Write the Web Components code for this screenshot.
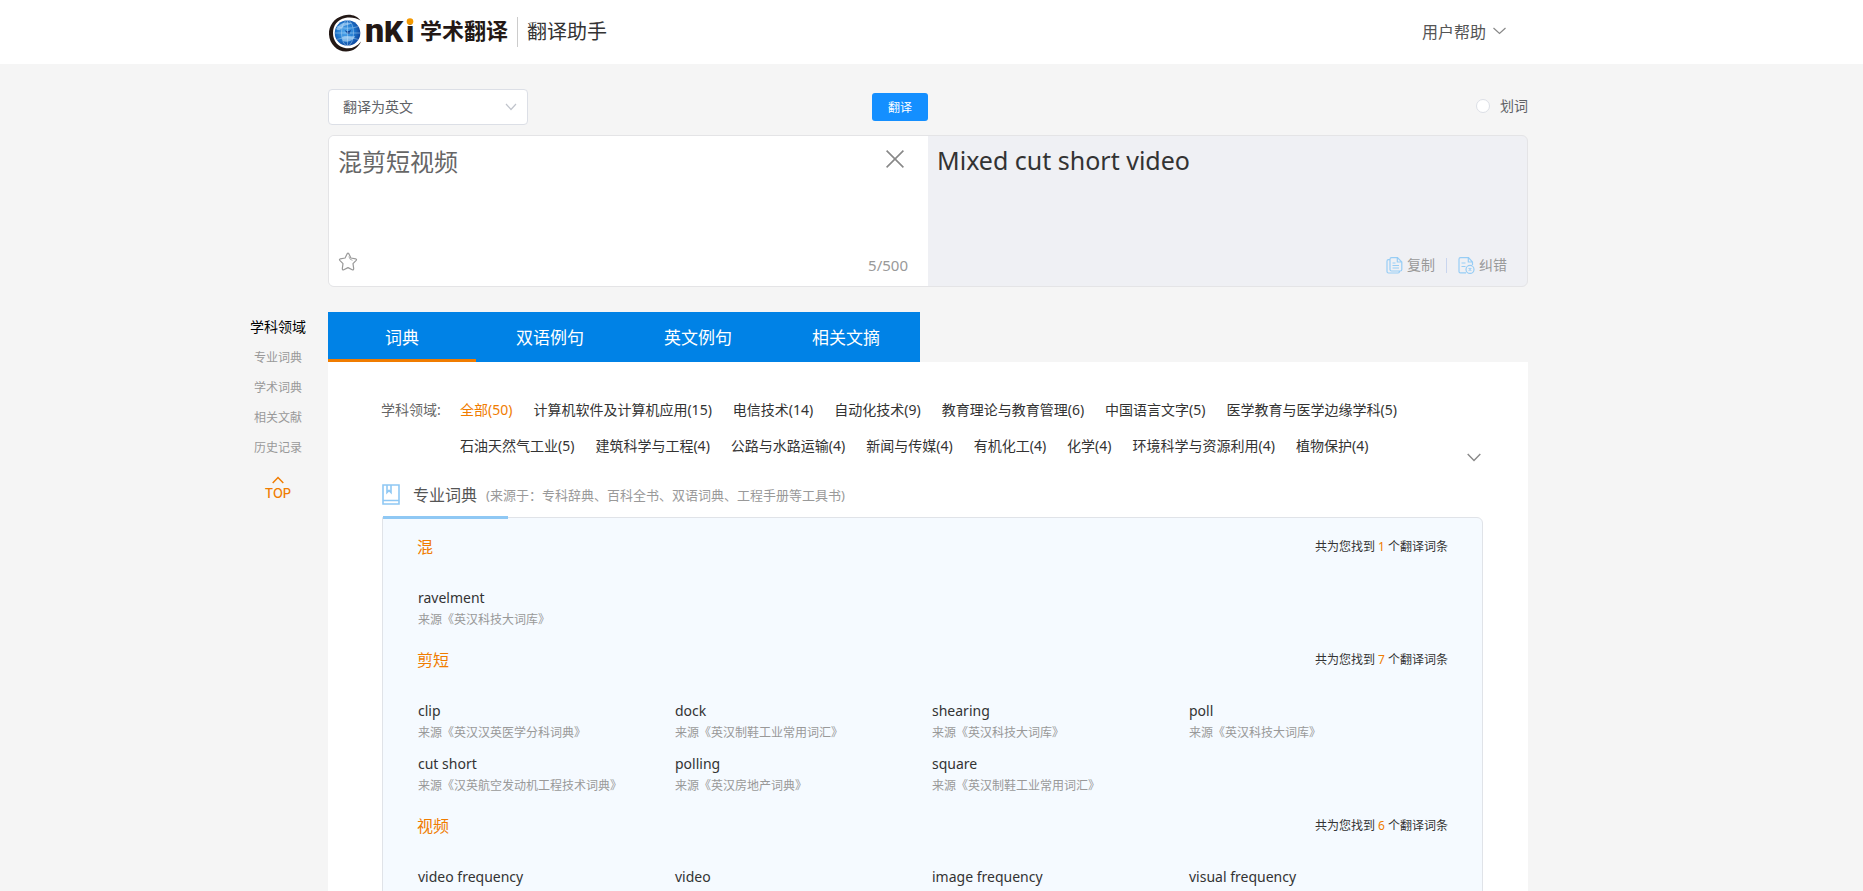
<!DOCTYPE html>
<html lang="zh-CN">
<head>
<meta charset="utf-8">
<title>CNKI学术翻译 - 翻译助手</title>
<style>
html, body { margin: 0; background: #f5f5f5; }
body { font-family: "Noto Sans", "Noto Sans CJK SC", sans-serif; font-size: 14px; color: #333; }
</style>
</head>
<body>
<cnki-app></cnki-app>

<template id="t-app">
<style>
:host { display: flex; flex-direction: column; height: 100vh; overflow: hidden; box-sizing: border-box; --edge: 7px; --w: 1200px; }
main { display: grid; grid-template-columns: minmax(100px, 1fr) minmax(0, var(--w)) minmax(0, 1fr); padding-right: var(--edge); row-gap: 25px; }
translate-panel, .results { grid-column: 2; min-width: 0; }
side-nav { grid-column: 1; justify-self: end; }
.card { background: #fff; padding: 30px 45px 0 53px; }
</style>
<site-header></site-header>
<main>
  <translate-panel></translate-panel>
  <side-nav></side-nav>
  <div class="results">
    <result-tabs></result-tabs>
    <div class="card">
      <subject-filter></subject-filter>
      <dict-section heading="专业词典" note="(来源于：专科辞典、百科全书、双语词典、工程手册等工具书)">
        <dict-group term="混" count="1">
          <dict-entry source="英汉科技大词库">ravelment</dict-entry>
        </dict-group>
        <dict-group term="剪短" count="7">
          <dict-entry source="英汉汉英医学分科词典">clip</dict-entry>
          <dict-entry source="英汉制鞋工业常用词汇">dock</dict-entry>
          <dict-entry source="英汉科技大词库">shearing</dict-entry>
          <dict-entry source="英汉科技大词库">poll</dict-entry>
          <dict-entry source="汉英航空发动机工程技术词典">cut short</dict-entry>
          <dict-entry source="英汉房地产词典">polling</dict-entry>
          <dict-entry source="英汉制鞋工业常用词汇">square</dict-entry>
        </dict-group>
        <dict-group term="视频" count="6">
          <dict-entry>video frequency</dict-entry>
          <dict-entry>video</dict-entry>
          <dict-entry>image frequency</dict-entry>
          <dict-entry>visual frequency</dict-entry>
        </dict-group>
      </dict-section>
    </div>
  </div>
</main>
</template>

<template id="t-header">
<style>
:host { display: block; background: #fff; padding-right: var(--edge); flex: none; }
.in { max-width: var(--w); height: 64px; margin: 0 auto; display: flex; align-items: center; }
a { display: block; height: 40px; color: inherit; }
svg { display: block; overflow: visible; }
.title { border-left: 1px solid #ccc; margin: 0 0 0 9px; padding-left: 9px; font-size: 20px; line-height: 30px; color: #333; font-weight: 400; }
button { margin-left: auto; margin-right: 22px; border: 0; padding: 0 0 2px; background: none; font: inherit; font-size: 16px; color: #555; display: flex; align-items: center; gap: 7px; }
</style>
<div class="in">
  <a href="#" aria-label="CNKI 学术翻译">
    <svg width="180" height="40" viewBox="0 0 180 40">
      <defs>
        <radialGradient id="g" cx=".42" cy=".45" r=".62"><stop offset="0" stop-color="#58aef0"/><stop offset=".55" stop-color="#1f78cf"/><stop offset="1" stop-color="#0b3f96"/></radialGradient>
      </defs>
      <path d="M32.500 8.500C29 3.500 22 1.500 15.500 3.500C6 6 .5 14 1 22.500C1.500 32 9 39.500 18 39.500C25 39.500 30.500 35.500 33 29.500C29 34.500 24 37 18 36.200C10 35 5 29 5 21C5 13.500 9.500 7.500 17 6C23 5 28.500 6 32.500 8.500Z" fill="#231815"/>
      <circle cx="19.500" cy="21" r="12.800" fill="url(#g)"/>
      <path d="M8 17C12 11 17 9.500 24 11C20 14 17 12 14 16C12 19 9 18 8 17ZM14 25C17 23 22 25 27 24C26 28 20 31 15 29Z" fill="#d4edff" opacity=".55"/>
      <path d="M16.500 18L19.500 19.500L23 18L21.500 22L19 21.500Z" fill="#0b3f96"/>
      <g fill="none" stroke="#cfe8fb" stroke-width=".7" opacity=".6"><ellipse cx="19.500" cy="21" rx="6" ry="12.800"/><path d="M19.500 8.200V33.800M7 21H32M8.500 14.500Q19.500 18 30.500 14.500M8.500 27.500Q19.500 24 30.500 27.500"/></g>
      <g fill="#231815" font-family="Roboto" font-weight="900">
        <text x="37" y="30" font-size="34">n</text><text x="56" y="30" font-size="30">K</text><text x="78" y="30" font-size="30">i</text>
      </g>
      <rect x="78" y="4" width="10" height="8" fill="#fff"/>
      <circle cx="82" cy="9.500" r="3.300" fill="#f39800"/>
      <text x="92" y="27" font-size="22" font-weight="700" fill="#231815" font-family="Noto Sans CJK SC">学术翻译</text>
    </svg>
  </a>
  <h1 class="title">翻译助手</h1>
  <button type="button">用户帮助<svg width="13" height="8" viewBox="0 0 13 8" fill="none" stroke="#888" stroke-width="1.200"><path d="M.5 1L6.500 6.500L12.500 1"/></svg></button>
</div>
</template>

<template id="t-panel">
<style>
:host { display: block; padding-top: 25px; }
.bar { display: grid; grid-template-columns: 1fr 1fr; align-items: center; height: 36px; margin-bottom: 10px; }
.l, .r { display: flex; align-items: center; justify-content: space-between; }
.r { justify-content: flex-end; }
.sel { position: relative; width: 200px; }
.sel svg { position: absolute; right: 11px; top: 14px; pointer-events: none; }
select { appearance: none; width: 100%; height: 36px; border: 1px solid #dcdfe6; border-radius: 4px; background: #fff; padding: 0 14px 2px; font: inherit; color: #606266; }
.go { width: 56px; height: 28px; border: 0; border-radius: 3px; background: #148fff; color: #fff; font: inherit; font-size: 12px; padding: 0; }
label { display: flex; align-items: center; gap: 10px; color: #606266; line-height: 20px; padding-bottom: 3px; }
input { appearance: none; width: 14px; height: 14px; border: 1px solid #dcdfe6; border-radius: 50%; background: #fff; margin: 0; }
.box { display: grid; grid-template-columns: 1fr 1fr; height: 150px; border: 1px solid #e4e4e6; border-radius: 6px; overflow: hidden; background: #eff0f4; }
.src { background: #fff; }
.src, .dst { display: flex; flex-direction: column; justify-content: space-between; padding: 8px 20px 6px 9px; font-size: 24px; line-height: 36px; }
.top, .foot { display: flex; justify-content: space-between; }
textarea { flex: 1; border: 0; padding: 0; resize: none; outline: 0; font: inherit; line-height: 36px; height: 72px; color: #666; background: none; overflow: hidden; }
.icon { border: 0; background: none; padding: 0; display: flex; align-items: center; font: inherit; font-size: 14px; color: #999; gap: 4px; line-height: 30px; }
.clear { height: 30px; margin-right: 4px; }
.star { height: 24px; }
.count { font-size: 15px; color: #999; line-height: 30px; }
output { color: #333; font-size: 25px; line-height: 32px; }
.dst .foot { justify-content: flex-end; align-items: center; }
.sep { width: 1px; height: 15px; background: #c9d5ee; margin: 0 11px; }
</style>
<div class="bar">
  <div class="l">
    <div class="sel"><select aria-label="翻译方向"><option>翻译为英文</option></select>
      <svg width="12" height="8" viewBox="0 0 12 8" fill="none" stroke="#c0c4cc" stroke-width="1.200"><path d="M1 1L6 6.500L11 1"/></svg></div>
    <button class="go" type="button">翻译</button>
  </div>
  <div class="r"><label><input type="radio" name="pick">划词</label></div>
</div>
<div class="box">
  <div class="src">
    <div class="top"><textarea aria-label="原文" spellcheck="false">混剪短视频</textarea>
      <button class="icon clear" type="button" aria-label="清空"><svg width="18" height="18" viewBox="0 0 18 18" fill="none" stroke="#888" stroke-width="1.600"><path d="M.6 .6L17.400 17.400M17.400 .6L.6 17.400"/></svg></button></div>
    <div class="foot">
      <button class="icon star" type="button" aria-label="收藏"><svg width="20" height="20" viewBox="0 0 20 20" fill="none" stroke="#999" stroke-width="1.200" stroke-linejoin="round"><path d="M9.200 1.700Q10 .6 10.800 1.700L12.900 6L17.600 6.800Q19.100 7.200 18.200 8.400L15 11.700L15.700 16.600Q15.700 18.400 14.200 17.800L10 15.600L5.800 17.800Q4.300 18.400 4.300 16.600L5 11.700L1.800 8.400Q.9 7.200 2.400 6.800L7.100 6Z"/><path d="M10.800 4.500L12.200 7.300L14.500 8.300" stroke-width=".8"/></svg></button>
      <span class="count">5/500</span></div>
  </div>
  <div class="dst">
    <output>Mixed cut short video</output>
    <div class="foot">
      <button class="icon" type="button"><svg width="17" height="17" viewBox="0 0 17 17" fill="none" stroke="#97cdf5" stroke-width="1.200"><path d="M5.500 .7H11.500L15.800 5V12.500Q15.800 14 14.300 14H5.500Q4 14 4 12.500V2.200Q4 .7 5.500 .7ZM11.300 1V5H15.500M4 2.700H2.500Q1 2.700 1 4.200V14.500Q1 16 2.500 16H12Q13.500 16 13.500 14.200M6.500 6H9.500M6.500 8.500H13M6.500 11H13"/></svg>复制</button>
      <span class="sep"></span>
      <button class="icon" type="button"><svg width="17" height="17" viewBox="0 0 17 17" fill="none" stroke="#97cdf5" stroke-width="1.200"><path d="M8 15.900H2.500Q1 15.900 1 14.400V2.200Q1 .7 2.500 .7H10.500L14.500 5V8M10.300 1V5H14.300M3.500 6H7.500M3.500 9.500H7.500M10.700 11.100L13.300 13.700M13.300 11.100L10.700 13.700"/><circle cx="12" cy="12.400" r="4"/></svg>纠错</button>
    </div>
  </div>
</div>
</template>

<template id="t-nav">
<style>
:host { display: block; width: 100px; text-align: center; }
nav { display: flex; flex-direction: column; }
a { color: #999; text-decoration: none; font-size: 12px; line-height: 30px; }
a.on { color: #000; font-size: 14px; padding-bottom: 1px; }
a.top { color: #f07c00; font: 500 13px/14px Inter, sans-serif; margin-top: 13px; display: flex; flex-direction: column; align-items: center; gap: 2px; }
</style>
<nav aria-label="页内导航">
  <a class="on" href="#">学科领域</a><a href="#">专业词典</a><a href="#">学术词典</a><a href="#">相关文献</a><a href="#">历史记录</a>
  <a class="top" href="#"><svg width="12" height="8" viewBox="0 0 12 8" fill="none" stroke="#f07c00" stroke-width="1.500"><path d="M.7 7L6 1.500L11.300 7"/></svg>TOP</a>
</nav>
</template>

<template id="t-tabs">
<style>
:host { display: block; }
[role=tablist] { display: grid; grid-template-columns: repeat(4, 148px); width: max-content; background: #0082e6; }
button { height: 50px; border: 0; border-bottom: 3px solid transparent; background: none; padding: 2px 0 0; font: inherit; font-size: 17px; color: #fff; }
button[aria-selected=true] { border-bottom-color: #f07c00; }
</style>
<div role="tablist">
  <button role="tab" type="button" aria-selected="true">词典</button><button role="tab" type="button" aria-selected="false">双语例句</button><button role="tab" type="button" aria-selected="false">英文例句</button><button role="tab" type="button" aria-selected="false">相关文摘</button>
</div>
</template>

<template id="t-filter">
<style>
:host { display: flex; line-height: 36px; }
.lab { color: #666; width: 79px; flex: none; }
ul { list-style: none; margin: 0; padding: 0; display: flex; flex-wrap: wrap; column-gap: 21px; flex: 1; }
a { color: #333; text-decoration: none; }
a.on { color: #f07c00; }
button { align-self: flex-end; border: 0; background: none; padding: 0; height: 14px; width: 14px; margin-right: 2px; display: flex; align-items: center; }
</style>
<span class="lab">学科领域:</span>
<ul></ul>
<button type="button" aria-label="展开"><svg width="14" height="9" viewBox="0 0 14 9" fill="none" stroke="#888" stroke-width="1.400"><path d="M.7 1L7 7.500L13.300 1"/></svg></button>
</template>

<template id="t-section">
<style>
:host { display: block; margin-top: 15px; margin-left: 1px; }
header { display: flex; align-items: center; height: 30px; }
h2 { margin: 0 9px 0 13px; font-size: 16px; font-weight: 400; color: #555; }
.note { font-size: 13px; color: #999; }
.mark { width: 125px; height: 3px; background: #8fc8f4; margin: 7px 0 -2px 1px; position: relative; }
.list { border: 1px solid #e0e3e8; border-radius: 0 6px 6px 6px; background: #f5faff; padding: 17px 34px 20px; }
</style>
<header>
  <svg width="18" height="21" viewBox="0 0 18 21" fill="none" stroke="#8fc8f4" stroke-width="1.600"><path d="M1 1H17V20H1ZM1 16.500H17M5 1.500V8.500L7 6.500L9 8.500V1.500"/></svg>
  <h2></h2><span class="note"></span>
</header>
<div class="mark"></div>
<div class="list"><slot></slot></div>
</template>

<template id="t-group">
<style>
:host { display: block; margin-bottom: 17px; }
header { display: flex; justify-content: space-between; height: 24px; line-height: 24px; margin-bottom: 28px; }
h3 { margin: 0; font-size: 16px; font-weight: 400; color: #f07c00; }
p { margin: 0; font-size: 12px; }
b { font-weight: 400; color: #f07c00; }
.grid { display: grid; grid-template-columns: repeat(4, 1fr); row-gap: 9px; padding-right: 3px; }
</style>
<header><h3></h3><p>共为您找到 <b></b> 个翻译词条</p></header>
<div class="grid"><slot></slot></div>
</template>

<template id="t-entry">
<style>
:host { display: block; line-height: 22px; padding-left: 1px; }
a { display: block; color: #333; text-decoration: none; }
.s { font-size: 12px; color: #999; display: block; }
</style>
<a href="#"><slot></slot></a>
</template>

<script>
const define = (name, id, init) => customElements.define(name, class extends HTMLElement {
  constructor() {
    super();
    this.attachShadow({ mode: 'open' }).append(document.getElementById(id).content.cloneNode(true));
  }
  connectedCallback() { if (init) init(this, this.shadowRoot); }
});
define('site-header', 't-header');
define('translate-panel', 't-panel');
define('side-nav', 't-nav');
define('result-tabs', 't-tabs');
define('subject-filter', 't-filter', (el, root) => {
  const subjects = ['全部(50)', '计算机软件及计算机应用(15)', '电信技术(14)', '自动化技术(9)', '教育理论与教育管理(6)', '中国语言文字(5)', '医学教育与医学边缘学科(5)', '石油天然气工业(5)', '建筑科学与工程(4)', '公路与水路运输(4)', '新闻与传媒(4)', '有机化工(4)', '化学(4)', '环境科学与资源利用(4)', '植物保护(4)'];
  root.querySelector('ul').innerHTML = subjects.map((s, i) => `<li><a href="#"${i ? '' : ' class="on"'}>${s}</a></li>`).join('');
});
define('dict-section', 't-section', (el, root) => {
  root.querySelector('h2').textContent = el.getAttribute('heading');
  root.querySelector('.note').textContent = el.getAttribute('note');
});
define('dict-group', 't-group', (el, root) => {
  root.querySelector('h3').textContent = el.getAttribute('term');
  root.querySelector('b').textContent = el.getAttribute('count');
});
define('dict-entry', 't-entry', (el, root) => {
  const source = el.getAttribute('source');
  if (!source) return;
  const line = document.createElement('span');
  line.className = 's';
  line.textContent = `来源《${source}》`;
  root.append(line);
});
define('cnki-app', 't-app');
</script>
</body>
</html>
